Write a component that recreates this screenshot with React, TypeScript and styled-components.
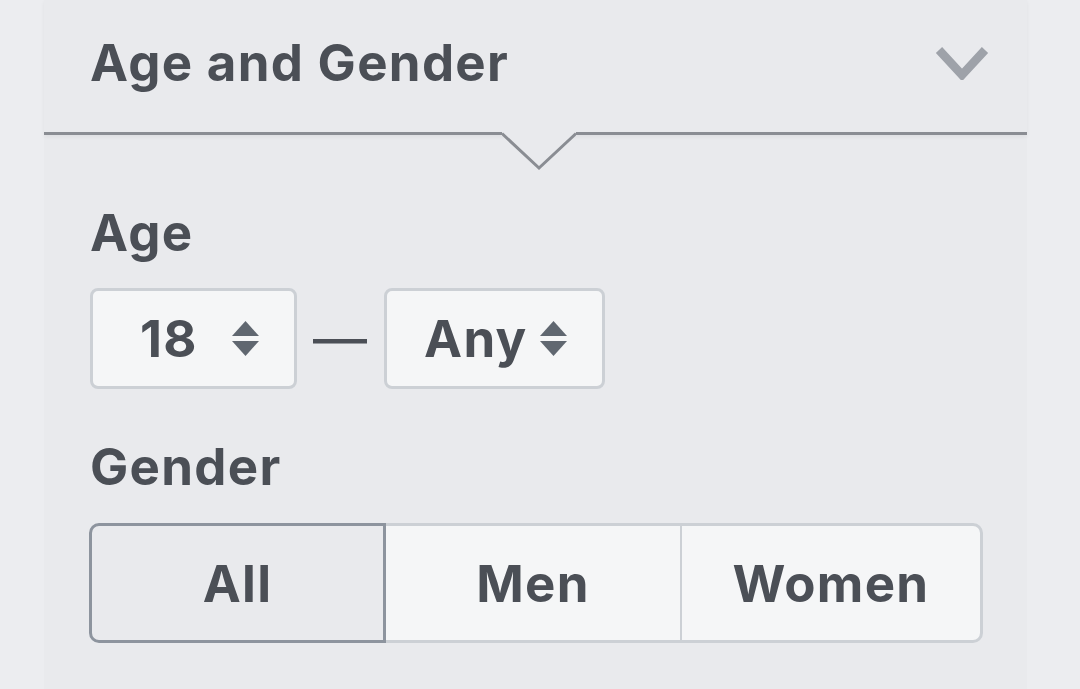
import React from "react";
import styled, { createGlobalStyle } from "styled-components";

const Global = createGlobalStyle`
  html, body { margin: 0; padding: 0; }
  body {
    background: #ecedf0;
    font-family: Inter, "Liberation Sans", Arial, sans-serif;
    -webkit-font-smoothing: antialiased;
  }
`;

const Page = styled.div`
  display: flex;
  height: 689px;
  overflow: hidden;
`;

const Panel = styled.section`
  margin-left: 44px;
  width: 983px;
  background: #e9eaed;
  color: #4b4f56;
  font-weight: 700;
  letter-spacing: 1.3px;
`;

const Header = styled.div`
  position: relative;
  height: 135px;
  box-sizing: border-box;
  display: flex;
  align-items: center;
  justify-content: space-between;
  padding: 0 37px 6px 46px;
  border-bottom: 3px solid #8a8d93;
  box-shadow: 0 2px 4px rgba(0, 0, 0, 0.05);
`;

const Title = styled.h2`
  margin: 0;
  font-size: 51px;
  line-height: 60px;
  font-weight: 700;
  letter-spacing: 1.3px;
`;

const Notch = styled.svg`
  position: absolute;
  left: 458px;
  top: 132px;
`;

const Body = styled.div`
  padding: 68px 0 0 46px;
  display: flex;
  flex-direction: column;
  align-items: flex-start;
`;

const Label = styled.div<{ $gap: number }>`
  font-size: 51px;
  line-height: 60px;
  margin-top: ${(p) => p.$gap}px;
`;

const AgeRow = styled.div`
  display: flex;
  align-items: center;
  margin-top: 25px;
`;

const Select = styled.div<{ $width: number; $padLeft: number }>`
  box-sizing: border-box;
  width: ${(p) => p.$width}px;
  height: 101px;
  display: flex;
  align-items: center;
  padding: 0 35px 0 ${(p) => p.$padLeft}px;
  background: #f5f6f7;
  border: 3px solid #ccd0d5;
  border-radius: 8px;
  font-size: 51px;
  line-height: 60px;
`;

const Value = styled.span`
  flex: 1;
`;

const Dash = styled.span`
  font-size: 54px;
  line-height: 60px;
  font-weight: 400;
  letter-spacing: 0;
  margin: 0 17px 0 16px;
  color: #4b4f56;
`;

const Segments = styled.div`
  margin-top: 26px;
  margin-left: -1px;
  display: grid;
  grid-template-columns: 297px 297px 300px;
`;

const Segment = styled.button<{ $active?: boolean }>`
  box-sizing: border-box;
  height: 120px;
  font: inherit;
  font-size: 51px;
  letter-spacing: 1.3px;
  color: #4b4f56;
  background: ${(p) => (p.$active ? "#e9eaed" : "#f5f6f7")};
  border: 3px solid ${(p) => (p.$active ? "#8d949e" : "#ccd0d5")};
  position: relative;
  z-index: ${(p) => (p.$active ? 1 : 0)};
  margin-left: -3px;
  padding: 0;
  &:first-child {
    margin-left: 0;
    border-radius: 10px 0 0 10px;
  }
  &:last-child {
    border-radius: 0 10px 10px 0;
    border-left-width: 2px;
  }
`;

const Chevron = () => (
  <svg width="56" height="34" viewBox="0 0 56 34">
    <polyline points="5,4 28,29 51,4" fill="none" stroke="#9ea2a9" strokeWidth="8.5" />
  </svg>
);

const Arrows = () => (
  <svg width="27" height="36" viewBox="0 0 27 36">
    <polygon points="0,15 13.5,0 27,15" fill="#606770" />
    <polygon points="0,20 27,20 13.5,35" fill="#606770" />
  </svg>
);

export default function App() {
  return (
    <>
      <Global />
      <Page>
        <Panel>
          <Header>
            <Title>Age and Gender</Title>
            <Chevron />
            <Notch width="74" height="40" viewBox="0 0 74 40">
              <polygon points="0,0 74,0 74,1.5 37,36 0,1.5" fill="#e9eaed" />
              <polyline points="0,1.5 37,36 74,1.5" fill="none" stroke="#8a8d93" strokeWidth="3" />
            </Notch>
          </Header>
          <Body>
            <Label $gap={0}>Age</Label>
            <AgeRow>
              <Select $width={207} $padLeft={47}>
                <Value>18</Value>
                <Arrows />
              </Select>
              <Dash>—</Dash>
              <Select $width={221} $padLeft={37}>
                <Value>Any</Value>
                <Arrows />
              </Select>
            </AgeRow>
            <Label $gap={48}>Gender</Label>
            <Segments>
              <Segment $active>All</Segment>
              <Segment>Men</Segment>
              <Segment>Women</Segment>
            </Segments>
          </Body>
        </Panel>
      </Page>
    </>
  );
}
